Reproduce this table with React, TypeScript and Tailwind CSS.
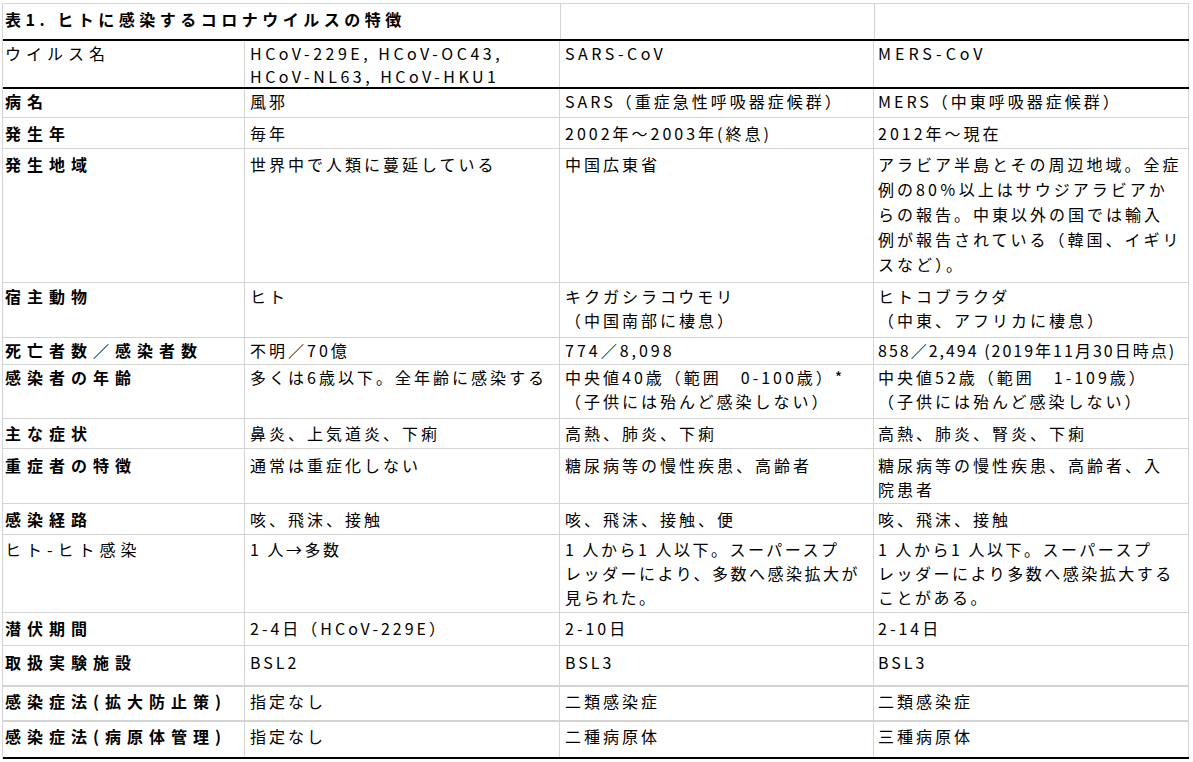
const font = "font-['Noto_Sans_CJK_JP','Noto_Sans',sans-serif]";

type Row = {
  label: string;
  cells: string[][];
  h: string;
  pt: string;
  line?: string;
  plainLabel?: boolean;
  track?: string;
  trackCell?: Record<number, string>;
};

const rows: Row[] = [
  { label: '病名', cells: [['風邪'], ['SARS（重症急性呼吸器症候群）'], ['MERS（中東呼吸器症候群）']], h: 'h-[29px]', pt: 'pt-0' },
  { label: '発生年', cells: [['毎年'], ['2002年～2003年(終息)'], ['2012年～現在']], h: 'h-[31px]', pt: 'pt-[3px]' },
  {
    label: '発生地域',
    cells: [
      ['世界中で人類に蔓延している'],
      ['中国広東省'],
      ['アラビア半島とその周辺地域。全症', '例の80％以上はサウジアラビアか', 'らの報告。中東以外の国では輸入', '例が報告されている（韓国、イギリ', 'スなど）。'],
    ],
    h: 'h-[134px]',
    pt: 'pt-[3px]',
  },
  { label: '宿主動物', cells: [['ヒト'], ['キクガシラコウモリ', '（中国南部に棲息）'], ['ヒトコブラクダ', '（中東、アフリカに棲息）']], h: 'h-[55px]', pt: 'pt-[1px]' },
  {
    label: '死亡者数／感染者数',
    cells: [['不明／70億'], ['774／8,098'], ['858／2,494 (2019年11月30日時点)']],
    h: 'h-[27px]',
    pt: 'pt-0',
    trackCell: { 2: 'tracking-[2px]' },
  },
  {
    label: '感染者の年齢',
    cells: [['多くは6歳以下。全年齢に感染する'], ['中央値40歳（範囲　0-100歳）*', '（子供には殆んど感染しない）'], ['中央値52歳（範囲　1-109歳）', '（子供には殆んど感染しない）']],
    h: 'h-[54px]',
    pt: 'pt-0',
  },
  { label: '主な症状', cells: [['鼻炎、上気道炎、下痢'], ['高熱、肺炎、下痢'], ['高熱、肺炎、腎炎、下痢']], h: 'h-[30px]', pt: 'pt-[2px]' },
  { label: '重症者の特徴', cells: [['通常は重症化しない'], ['糖尿病等の慢性疾患、高齢者'], ['糖尿病等の慢性疾患、高齢者、入', '院患者']], h: 'h-[55px]', pt: 'pt-[4px]' },
  { label: '感染経路', cells: [['咳、飛沫、接触'], ['咳、飛沫、接触、便'], ['咳、飛沫、接触']], h: 'h-[31px]', pt: 'pt-[3px]' },
  {
    label: 'ヒト-ヒト感染',
    plainLabel: true,
    cells: [
      ['1 人→多数'],
      ['1 人から1 人以下。スーパースプ', 'レッダーにより、多数へ感染拡大が', '見られた。'],
      ['1 人から1 人以下。スーパースプ', 'レッダーにより多数へ感染拡大する', 'ことがある。'],
    ],
    h: 'h-[78px]',
    pt: 'pt-[2px]',
    track: 'tracking-[2.5px]',
  },
  { label: '潜伏期間', cells: [['2-4日（HCoV-229E）'], ['2-10日'], ['2-14日']], h: 'h-[33px]', pt: 'pt-[3px]' },
  { label: '取扱実験施設', cells: [['BSL2'], ['BSL3'], ['BSL3']], h: 'h-[41px]', pt: 'pt-[4px]', line: 'border-b-2 border-b-[#d4d4d4]' },
  { label: '感染症法(拡大防止策)', cells: [['指定なし'], ['二類感染症'], ['二類感染症']], h: 'h-[35px]', pt: 'pt-[2px]', line: 'border-b-2 border-b-[#d4d4d4]' },
  { label: '感染症法(病原体管理)', cells: [['指定なし'], ['二種病原体'], ['三種病原体']], h: 'h-[37px]', pt: 'pt-[2px]', line: 'border-b-2 border-b-black' },
];

const widths = ['w-[242px]', 'w-[315px]', 'w-[314px]', 'w-[315px]'];

export default function App() {
  return (
    <div className={`${font} bg-white w-[1193px] h-[762px] overflow-hidden text-black text-[16px] leading-[24px]`}>
      <div className="mt-[3px] ml-[2px] w-[1187px] border-t border-l border-[#d4d4d4]">
        {/* title row */}
        <div className="flex h-[37px] border-b-2 border-b-black">
          <div className="w-[557px] pt-[3px] pl-[2px] font-bold tracking-[4.5px] whitespace-nowrap">
            表1. ヒトに感染するコロナウイルスの特徴
          </div>
          <div className="w-[314px] border-l border-[#d4d4d4]" />
          <div className="w-[315px] border-l border-r border-[#d4d4d4]" />
        </div>

        {/* header row */}
        <div className="flex h-[48px] border-b-2 border-b-black leading-[23px]">
          <div className={`${widths[0]} border-r border-[#d4d4d4] pt-[1px] pl-[2px] tracking-[5px]`}>ウイルス名</div>
          <div className={`${widths[1]} border-r border-[#d4d4d4] pt-[1px] pl-[5px] tracking-[3.5px] whitespace-nowrap`}>
            HCoV-229E, HCoV-OC43,
            <br />
            HCoV-NL63, HCoV-HKU1
          </div>
          <div className={`${widths[2]} border-r border-[#d4d4d4] pt-[1px] pl-[5px] tracking-[3.5px]`}>SARS-CoV</div>
          <div className={`${widths[3]} border-r border-[#d4d4d4] pt-[1px] pl-[4px] tracking-[4px]`}>MERS-CoV</div>
        </div>

        {rows.map((r) => (
          <div key={r.label} className={`flex ${r.h} ${r.line ?? 'border-b border-[#d4d4d4]'}`}>
            <div
              className={`${widths[0]} border-r border-[#d4d4d4] ${r.pt} pl-[2px] whitespace-nowrap ${
                r.plainLabel ? 'tracking-[5px]' : 'font-bold tracking-[6px]'
              }`}
            >
              {r.label}
            </div>
            {r.cells.map((lines, i) => (
              <div
                key={i}
                className={`${widths[i + 1]} border-r border-[#d4d4d4] ${r.pt} ${
                  i === 2 ? 'pl-[4px]' : 'pl-[5px]'
                } whitespace-nowrap ${r.trackCell?.[i] ?? r.track ?? 'tracking-[3px]'} ${
                  r.label === '発生地域' ? 'leading-[25px]' : ''
                }`}
              >
                {lines.map((l, j) => (
                  <div key={j}>{l}</div>
                ))}
              </div>
            ))}
          </div>
        ))}
      </div>
    </div>
  );
}
